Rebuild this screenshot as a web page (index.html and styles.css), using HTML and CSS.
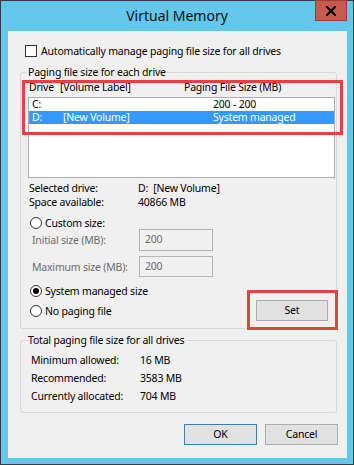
FILE: index.html
```
<!DOCTYPE html>
<html>
<head>
<meta charset="utf-8">
<title>Virtual Memory</title>
<link rel="stylesheet" href="styles.css">
</head>
<body>
<div class="window">
  <div class="titlebar">
    <span class="title">Virtual Memory</span>
    <button class="close" aria-label="Close">
      <svg width="10" height="10" viewBox="0 0 10 10"><path d="M1 1L9 9M9 1L1 9" stroke="#000" stroke-width="2.2" stroke-linecap="square"/></svg>
    </button>
  </div>
  <div class="client">
    <label class="check-row"><span class="checkbox"></span><span>Automatically manage paging file size for all drives</span></label>

    <fieldset class="group group-drives">
      <legend>Paging file size for each drive</legend>
      <div class="list-head">
        <span>Drive</span><span>[Volume Label]</span><span>Paging File Size (MB)</span>
      </div>
      <div class="listbox">
        <div class="list-row"><span>C:</span><span></span><span>200 - 200</span></div>
        <div class="list-row selected"><span>D:</span><span>[New Volume]</span><span>System managed</span></div>
      </div>
      <div class="info">
        <div class="info-row"><span>Selected drive:</span><span>D:&nbsp; [New Volume]</span></div>
        <div class="info-row"><span>Space available:</span><span>40866 MB</span></div>
      </div>
      <div class="radio-row custom"><span class="radio"></span><span>Custom size:</span></div>
      <div class="field-row first"><span class="field-label">Initial size (MB):</span><span class="textbox">200</span></div>
      <div class="field-row second"><span class="field-label">Maximum size (MB):</span><span class="textbox">200</span></div>
      <div class="radio-row system"><span class="radio checked"></span><span>System managed size</span></div>
      <div class="last-row">
        <div class="radio-row"><span class="radio"></span><span>No paging file</span></div>
        <button class="btn set">Set</button>
      </div>
    </fieldset>

    <fieldset class="group group-total">
      <legend>Total paging file size for all drives</legend>
      <div class="total-row"><span>Minimum allowed:</span><span>16 MB</span></div>
      <div class="total-row"><span>Recommended:</span><span>3583 MB</span></div>
      <div class="total-row"><span>Currently allocated:</span><span>704 MB</span></div>
    </fieldset>

    <div class="buttons">
      <button class="btn ok">OK</button>
      <button class="btn">Cancel</button>
    </div>
  </div>
  <div class="mark mark-list"></div>
  <div class="mark mark-set"></div>
</div>
</body>
</html>
```
FILE: styles.css
```
* { box-sizing: border-box; }
html, body { margin: 0; padding: 0; background: #fff; }
body {
  font-family: "Noto Sans", "Open Sans", sans-serif;
  font-size: 10.5px;
  letter-spacing: -0.2px;
  color: #000;
}
.window {
  position: relative;
  width: 354px;
  height: 465px;
  border: 1px solid #3b3b3b;
  background: #62c7ea;
  padding: 0 6px 6px 7px;
  display: flex;
  flex-direction: column;
}
.titlebar {
  position: relative;
  height: 30px;
  margin: 0 -6px 0 -7px;
  display: flex;
  align-items: center;
  justify-content: center;
  padding-bottom: 2px;
}
.title {
  font-size: 14px;
  letter-spacing: 0;
  color: #111;
}
.close {
  position: absolute;
  right: 6px;
  top: -1px;
  width: 32px;
  height: 21px;
  border: 1px solid #9c3d36;
  background: #c75a4f;
  padding: 0;
  display: flex;
  align-items: center;
  justify-content: center;
}
.client {
  flex: 1;
  background: #f0f0f0;
  padding: 13px 10px 0 12px;
  display: flex;
  flex-direction: column;
}
.check-row {
  display: flex;
  align-items: center;
  height: 14px;
  padding-left: 5px;
  gap: 4px;
  line-height: 14px;
}
.checkbox {
  width: 12px;
  height: 12px;
  border: 1px solid #333;
  background: #fff;
  flex: none;
}
.group {
  margin: 0;
  padding: 0;
  border: 1px solid #d8d8d8;
  border-radius: 3px;
  min-width: 0;
}
.group legend {
  margin-left: 6px;
  padding: 0 1px;
  line-height: 14px;
}
.group-drives {
  margin-top: 7px;
  padding-bottom: 7px;
}
.list-head {
  display: grid;
  grid-template-columns: 31px 124px 1fr;
  padding-left: 8px;
  margin-top: 1px;
  line-height: 14px;
}
.listbox {
  margin: 3px 0 0 7px;
  width: 307px;
  height: 81px;
  border: 1px solid #abadb3;
  background: #fff;
}
.list-row {
  display: grid;
  grid-template-columns: 31px 150px 1fr;
  padding-left: 3px;
  height: 13px;
  line-height: 13px;
}
.list-row.selected {
  background: #3399ff;
  color: #fff;
}
.info { margin-top: 3px; padding-left: 8px; }
.info-row {
  display: grid;
  grid-template-columns: 109px 1fr;
  line-height: 14px;
}
.radio-row {
  display: flex;
  align-items: center;
  gap: 3px;
  padding-left: 9px;
  line-height: 14px;
  height: 14px;
}
.radio {
  width: 12px;
  height: 12px;
  border-radius: 50%;
  border: 1px solid #333;
  background: #fff;
  flex: none;
  position: relative;
}
.radio.checked::after {
  content: "";
  position: absolute;
  left: 2px;
  top: 2px;
  width: 6px;
  height: 6px;
  border-radius: 50%;
  background: #000;
}
.custom { margin-top: 7px; height: 13px; }
.field-row {
  display: grid;
  grid-template-columns: 107px 74px;
  padding-left: 11px;
  color: #6d6d6d;
}
.field-row.second { margin-top: 5px; }
.field-label { padding-top: 4px; line-height: 14px; }
.textbox {
  height: 22px;
  border: 1px solid #b4b4b4;
  padding-left: 5px;
  line-height: 19px;
  color: #6d6d6d;
}
.field-row.second .textbox { height: 21px; line-height: 18px; }
.system { margin-top: 7px; }
.last-row {
  display: flex;
  align-items: center;
  justify-content: space-between;
  margin-top: 2px;
  padding-right: 8px;
}
.btn {
  font: inherit;
  letter-spacing: inherit;
  color: #000;
  background: #e1e1e1;
  border: 1px solid #adadad;
  width: 73px;
  height: 21px;
  padding: 0;
  line-height: 19px;
}
.btn.set { width: 72px; }
.btn.ok { border-color: #3c7fb1; }
.group-total {
  margin-top: 4px;
  padding: 0 0 7px 0;
}
.total-row {
  display: grid;
  grid-template-columns: 109px 1fr;
  line-height: 18px;
  padding-left: 10px;
}
.total-row:first-of-type { margin-top: 4px; }
.buttons {
  display: flex;
  justify-content: flex-end;
  gap: 8px;
  margin-top: 11px;
  margin-right: -1px;
}
.mark {
  position: absolute;
  border: 3px solid #e5413f;
  pointer-events: none;
}
.mark-list { left: 21px; top: 79px; width: 321px; height: 55px; }
.mark-set { left: 246px; top: 289px; width: 91px; height: 40px; }
```
